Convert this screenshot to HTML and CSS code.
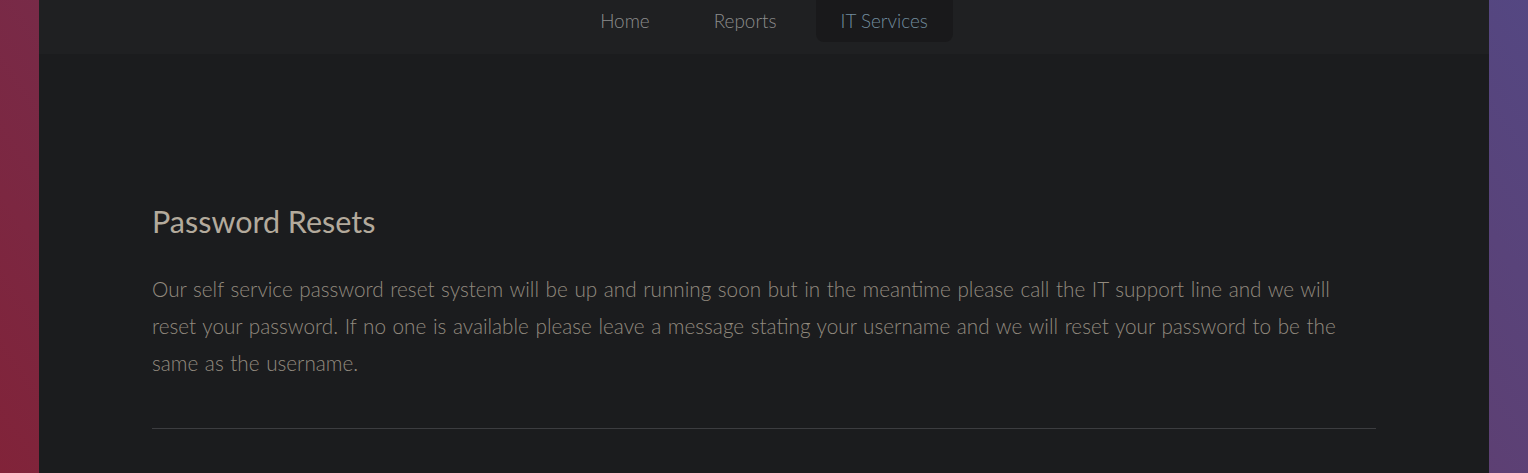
FILE: index.html
```html
<!DOCTYPE html>
<html lang="en">
<head>
<meta charset="utf-8">
<title>IT Services</title>
<link rel="stylesheet" href="styles.css">
</head>
<body>
<div class="page">
  <header class="topbar">
    <nav class="nav">
      <a class="nav-item" href="#">Home</a>
      <a class="nav-item" href="#">Reports</a>
      <a class="nav-item active" href="#">IT Services</a>
    </nav>
  </header>
  <main class="content">
    <h2 class="title">Password Resets</h2>
    <p class="text">Our self service password reset system will be up and running soon but in the meantime please call the IT support line and we will reset your password. If no one is available please leave a message stating your username and we will reset your password to be the same as the username.</p>
    <hr class="rule">
  </main>
</div>
</body>
</html>
```
FILE: styles.css
```css
html, body {
  margin: 0;
  padding: 0;
  height: 100%;
}
body {
  background: linear-gradient(54deg, #812339 0%, #544782 100%);
  font-family: Lato, "Liberation Sans", sans-serif;
  font-weight: 300;
  overflow: hidden;
}
.page {
  margin: 0 39px;
  min-height: 100%;
  background: #1b1c1e;
}
.topbar {
  height: 54px;
  background: #1f2022;
}
.nav {
  display: flex;
  justify-content: center;
}
.nav-item {
  display: block;
  height: 42px;
  line-height: 42px;
  padding: 0 25px;
  margin: 0 7px;
  font-size: 18.9px;
  color: #8c8c8c;
  text-decoration: none;
  border-radius: 0 0 8px 8px;
}
.nav-item.active {
  background: #19191b;
  color: #718c9e;
}
.content {
  padding: 147px 113px 0;
}
.title {
  margin: 0;
  font-size: 30.5px;
  font-weight: 400;
  line-height: 40px;
  color: #b3aa9c;
}
.text {
  margin: 30px 0 0;
  font-size: 20.7px;
  line-height: 37px;
  word-spacing: 1px;
  color: #928a7e;
}
.rule {
  margin: 46px 0 0;
  border: 0;
  height: 1px;
  background: #3c3d40;
}
```
